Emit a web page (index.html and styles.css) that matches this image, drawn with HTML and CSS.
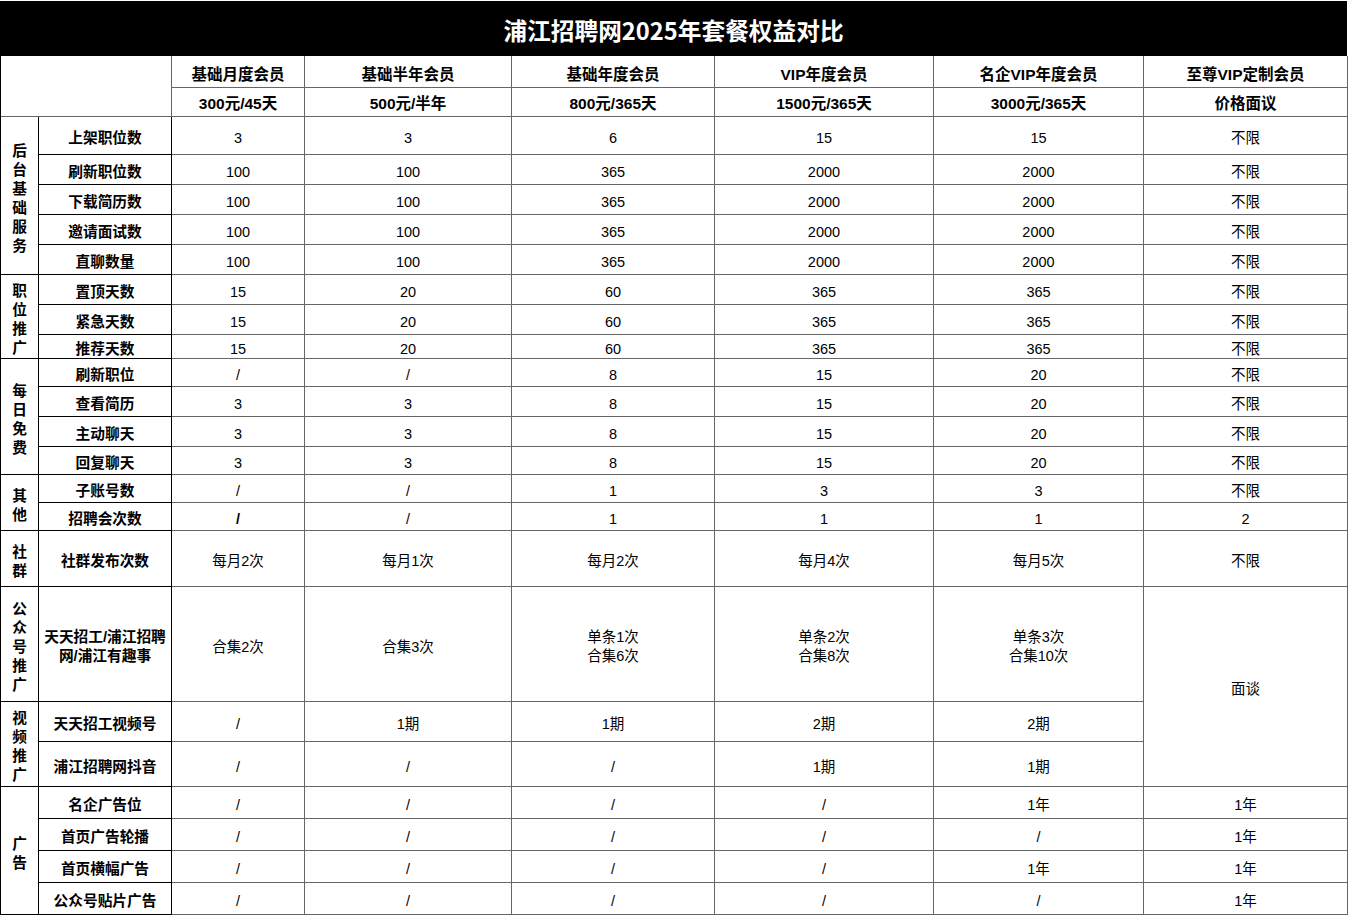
FILE: index.html
```html
<!DOCTYPE html>
<html lang="zh-CN">
<head>
<meta charset="utf-8">
<title>浦江招聘网2025年套餐权益对比</title>
<link rel="stylesheet" href="styles.css">
</head>
<body>
<div class="sheet">
  <div class="title">浦江招聘网2025年套餐权益对比</div>
  <table class="grid">
    <colgroup>
      <col class="c-cat"><col class="c-lbl"><col class="c-1"><col class="c-2"><col class="c-3"><col class="c-4"><col class="c-5"><col class="c-6">
    </colgroup>
    <tbody>
      <tr class="r32">
        <td class="hd blank" colspan="2" rowspan="2"></td>
        <td class="hd">基础月度会员</td><td class="hd">基础半年会员</td><td class="hd">基础年度会员</td><td class="hd">VIP年度会员</td><td class="hd">名企VIP年度会员</td><td class="hd">至尊VIP定制会员</td>
      </tr>
      <tr class="r29">
        <td class="hd price">300元/45天</td><td class="hd price">500元/半年</td><td class="hd price">800元/365天</td><td class="hd price">1500元/365天</td><td class="hd price">3000元/365天</td><td class="hd price">价格面议</td>
      </tr>

      <tr class="r38"><td class="cat" rowspan="5">后台基础服务</td><td class="lbl">上架职位数</td><td>3</td><td>3</td><td>6</td><td>15</td><td>15</td><td>不限</td></tr>
      <tr class="r30"><td class="lbl">刷新职位数</td><td>100</td><td>100</td><td>365</td><td>2000</td><td>2000</td><td>不限</td></tr>
      <tr class="r30"><td class="lbl">下载简历数</td><td>100</td><td>100</td><td>365</td><td>2000</td><td>2000</td><td>不限</td></tr>
      <tr class="r30"><td class="lbl">邀请面试数</td><td>100</td><td>100</td><td>365</td><td>2000</td><td>2000</td><td>不限</td></tr>
      <tr class="r30"><td class="lbl">直聊数量</td><td>100</td><td>100</td><td>365</td><td>2000</td><td>2000</td><td>不限</td></tr>

      <tr class="r30"><td class="cat" rowspan="3">职位推广</td><td class="lbl">置顶天数</td><td>15</td><td>20</td><td>60</td><td>365</td><td>365</td><td>不限</td></tr>
      <tr class="r30"><td class="lbl">紧急天数</td><td>15</td><td>20</td><td>60</td><td>365</td><td>365</td><td>不限</td></tr>
      <tr class="r24"><td class="lbl">推荐天数</td><td>15</td><td>20</td><td>60</td><td>365</td><td>365</td><td>不限</td></tr>

      <tr class="r28"><td class="cat" rowspan="4">每日免费</td><td class="lbl">刷新职位</td><td>/</td><td>/</td><td>8</td><td>15</td><td>20</td><td>不限</td></tr>
      <tr class="r30"><td class="lbl">查看简历</td><td>3</td><td>3</td><td>8</td><td>15</td><td>20</td><td>不限</td></tr>
      <tr class="r30"><td class="lbl">主动聊天</td><td>3</td><td>3</td><td>8</td><td>15</td><td>20</td><td>不限</td></tr>
      <tr class="r28"><td class="lbl">回复聊天</td><td>3</td><td>3</td><td>8</td><td>15</td><td>20</td><td>不限</td></tr>

      <tr class="r28"><td class="cat" rowspan="2">其他</td><td class="lbl">子账号数</td><td>/</td><td>/</td><td>1</td><td>3</td><td>3</td><td>不限</td></tr>
      <tr class="r28"><td class="lbl">招聘会次数</td><td class="strong">/</td><td>/</td><td>1</td><td>1</td><td>1</td><td>2</td></tr>

      <tr class="r56"><td class="cat">社群</td><td class="lbl">社群发布次数</td><td>每月2次</td><td>每月1次</td><td>每月2次</td><td>每月4次</td><td>每月5次</td><td>不限</td></tr>

      <tr class="r115"><td class="cat">公众号推广</td><td class="lbl ml">天天招工/浦江招聘<br>网/浦江有趣事</td><td>合集2次</td><td>合集3次</td><td class="ml">单条1次<br>合集6次</td><td class="ml">单条2次<br>合集8次</td><td class="ml">单条3次<br>合集10次</td><td rowspan="3">面谈</td></tr>

      <tr class="r40"><td class="cat" rowspan="2">视频推广</td><td class="lbl">天天招工视频号</td><td>/</td><td>1期</td><td>1期</td><td>2期</td><td>2期</td></tr>
      <tr class="r45"><td class="lbl">浦江招聘网抖音</td><td>/</td><td>/</td><td>/</td><td>1期</td><td>1期</td></tr>

      <tr class="r32"><td class="cat" rowspan="4">广告</td><td class="lbl">名企广告位</td><td>/</td><td>/</td><td>/</td><td>/</td><td>1年</td><td>1年</td></tr>
      <tr class="r32"><td class="lbl">首页广告轮播</td><td>/</td><td>/</td><td>/</td><td>/</td><td>/</td><td>1年</td></tr>
      <tr class="r32"><td class="lbl">首页横幅广告</td><td>/</td><td>/</td><td>/</td><td>/</td><td>1年</td><td>1年</td></tr>
      <tr class="r32"><td class="lbl">公众号贴片广告</td><td>/</td><td>/</td><td>/</td><td>/</td><td>/</td><td>1年</td></tr>
    </tbody>
  </table>
</div>
</body>
</html>
```

FILE: styles.css
```css
html, body {
  margin: 0;
  padding: 0;
  background: #fff;
}

body {
  padding-top: 1px;
  font-family: "Liberation Sans", "Noto Sans CJK SC", sans-serif;
  color: #000;
}

.sheet {
  width: 1348px;
}

.title {
  width: 1347px;
  height: 55px;
  background: #000;
  color: #fff;
  display: flex;
  align-items: center;
  justify-content: center;
  box-sizing: border-box;
  padding-top: 4px;
  font-family: "Noto Sans CJK SC", sans-serif;
  font-weight: 700;
  font-size: 23.7px;
  line-height: 1;
}

.grid {
  width: 1348px;
  table-layout: fixed;
  border-collapse: separate;
  border-spacing: 0;
  border-left: 1px solid #000;
}

.c-cat { width: 38px; }
.c-lbl { width: 133px; }
.c-1 { width: 133px; }
.c-2 { width: 207px; }
.c-3 { width: 203px; }
.c-4 { width: 219px; }
.c-5 { width: 210px; }
.c-6 { width: 204px; }

.grid td {
  box-sizing: border-box;
  padding: 6px 2px 0;
  border-right: 1px solid #666;
  border-bottom: 1px solid #666;
  text-align: center;
  vertical-align: middle;
  font-size: 14.5px;
  line-height: 17px;
  font-weight: 400;
}

.grid td.ml {
  line-height: 19px;
}

.grid td.hd {
  font-size: 15.5px;
  font-weight: 700;
}

.grid td.hd.price {
  padding-top: 2px;
}

.grid td.cat {
  border-right-color: #000;
  border-bottom-color: #000;
  font-weight: 700;
  font-size: 14.7px;
  line-height: 19px;
  padding: 6px 4px 0;
  word-break: break-all;
}

.grid td.lbl {
  border-right-color: #000;
  border-bottom-color: #000;
  font-weight: 700;
  font-size: 14.7px;
}

.grid td.strong {
  font-weight: 700;
}

.r24 { height: 24px; }
.r28 { height: 28px; }
.r29 { height: 29px; }
.r30 { height: 30px; }
.r32 { height: 32px; }
.r38 { height: 38px; }
.r40 { height: 40px; }
.r45 { height: 45px; }
.r56 { height: 56px; }
.r115 { height: 115px; }
```
